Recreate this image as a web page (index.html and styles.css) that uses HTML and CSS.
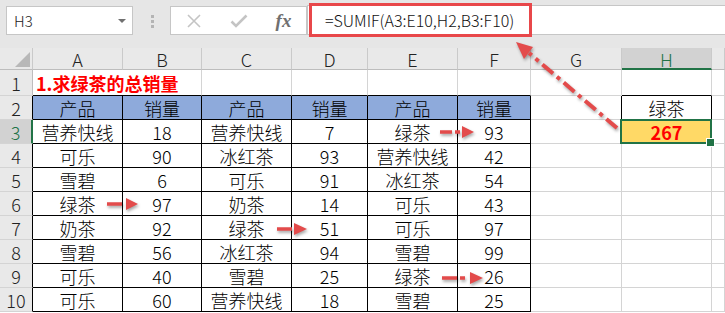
FILE: index.html
```html
<!DOCTYPE html>
<html lang="zh-CN">
<head>
<meta charset="utf-8">
<title>SUMIF</title>
<link rel="stylesheet" href="styles.css">
</head>
<body>
<div class="app">
  <div class="toolbar">
    <div class="namebox"><span>H3</span><span class="caret"></span></div>
    <div class="grip"><i></i><i></i><i></i></div>
    <div class="fbtns">
      <span class="fbtn"><svg width="16" height="16" viewBox="0 0 16 16"><path d="M2 2 L14 14 M14 2 L2 14" class="ico"/></svg></span>
      <span class="fbtn"><svg width="18" height="16" viewBox="0 0 18 16"><path d="M1.5 8.5 L6 13 L16.5 2.5" class="ico ico-check"/></svg></span>
      <span class="fbtn fx">fx</span>
    </div>
    <div class="formula"><span class="formula-box">=SUMIF(A3:E10,H2,B3:F10)</span></div>
  </div>
  <div class="sheet">
    <div class="ch corner"><span class="tri"></span></div>
    <div class="ch">A</div><div class="ch">B</div><div class="ch">C</div><div class="ch">D</div><div class="ch">E</div><div class="ch">F</div><div class="ch">G</div><div class="ch sel">H</div><div class="ch"></div>

    <div class="rh r1">1</div>
    <div class="title tt">1.求绿茶的总销量</div><div class="tt"></div><div class="tt"></div><div class="tt"></div><div class="tt"></div><div></div><div class="tt"></div><div></div>

    <div class="rh tl">2</div>
    <div class="t th">产品</div><div class="t th">销量</div><div class="t th">产品</div><div class="t th">销量</div><div class="t th">产品</div><div class="t th">销量</div><div class="tr"></div><div class="t">绿茶</div><div></div>

    <div class="rh sel">3</div>
    <div class="t">营养快线</div><div class="t">18</div><div class="t">营养快线</div><div class="t">7</div><div class="t">绿茶</div><div class="t">93</div><div></div><div class="active">267</div><div></div>

    <div class="rh tl">4</div>
    <div class="t">可乐</div><div class="t">90</div><div class="t">冰红茶</div><div class="t">93</div><div class="t">营养快线</div><div class="t">42</div><div></div><div></div><div></div>

    <div class="rh tl">5</div>
    <div class="t">雪碧</div><div class="t">6</div><div class="t">可乐</div><div class="t">91</div><div class="t">冰红茶</div><div class="t">54</div><div></div><div></div><div></div>

    <div class="rh tl">6</div>
    <div class="t">绿茶</div><div class="t">97</div><div class="t">奶茶</div><div class="t">14</div><div class="t">可乐</div><div class="t">43</div><div></div><div></div><div></div>

    <div class="rh tl">7</div>
    <div class="t">奶茶</div><div class="t">92</div><div class="t">绿茶</div><div class="t">51</div><div class="t">可乐</div><div class="t">97</div><div></div><div></div><div></div>

    <div class="rh tl">8</div>
    <div class="t">雪碧</div><div class="t">56</div><div class="t">冰红茶</div><div class="t">94</div><div class="t">雪碧</div><div class="t">99</div><div></div><div></div><div></div>

    <div class="rh tl">9</div>
    <div class="t">可乐</div><div class="t">40</div><div class="t">雪碧</div><div class="t">25</div><div class="t">绿茶</div><div class="t">26</div><div></div><div></div><div></div>

    <div class="rh tl">10</div>
    <div class="t">可乐</div><div class="t">60</div><div class="t">营养快线</div><div class="t">18</div><div class="t">雪碧</div><div class="t">25</div><div></div><div></div><div></div>
  </div>

  <svg class="arrows" width="725" height="313" viewBox="0 0 725 313">
    <g class="arrow big">
      <line x1="617" y1="128" x2="529" y2="53" stroke-dasharray="14 5 4 5"/>
      <polygon points="516,42 533,47 524,59"/>
    </g>
    <g class="arrow">
      <line x1="440" y1="132" x2="462" y2="132" stroke-dasharray="12 3 5 2"/>
      <polygon points="462,126 474,132 462,138"/>
    </g>
    <g class="arrow">
      <line x1="107" y1="204" x2="126" y2="204" stroke-dasharray="15 4"/>
      <polygon points="126,198 138,204 126,210"/>
    </g>
    <g class="arrow">
      <line x1="277" y1="229" x2="294" y2="229" stroke-dasharray="15 2"/>
      <polygon points="294,223 307,229 294,235"/>
    </g>
    <g class="arrow">
      <line x1="442" y1="278" x2="470" y2="278" stroke-dasharray="15 3 5 5"/>
      <polygon points="470,272 483,278 470,284"/>
    </g>
  </svg>
</div>
</body>
</html>
```

FILE: styles.css
```css
* { box-sizing: border-box; }
html, body { margin: 0; padding: 0; }
body {
  width: 725px;
  height: 313px;
  overflow: hidden;
  background: #fff;
  font-family: "Noto Sans CJK SC", "Noto Sans", sans-serif;
  color: #000;
}
.app { position: relative; width: 725px; height: 313px; }

/* ---------- toolbar ---------- */
.toolbar {
  height: 48px;
  background: #e6e6e6;
  display: flex;
  align-items: flex-start;
  padding: 6px 0 0 6px;
}
.namebox {
  width: 127px;
  height: 29px;
  background: #fff;
  border: 1px solid #c6c6c6;
  display: flex;
  align-items: center;
  justify-content: space-between;
  padding: 0 6px 0 7px;
  font-size: 15px;
  font-weight: 300;
  color: #222;
}
.caret {
  width: 0; height: 0;
  border-left: 4px solid transparent;
  border-right: 4px solid transparent;
  border-top: 4px solid #707070;
}
.grip {
  margin: 9px 0 0 18px;
  display: flex;
  flex-direction: column;
  gap: 2px;
}
.grip i { display: block; width: 3px; height: 3px; background: #b4b4b4; }
.fbtns {
  margin-left: 16px;
  width: 137px;
  height: 29px;
  background: #fff;
  border: 1px solid #c6c6c6;
  display: flex;
  align-items: center;
}
.fbtn {
  width: 45px;
  display: flex;
  align-items: center;
  justify-content: center;
}
.ico { fill: none; stroke: #c4c4c4; stroke-width: 1.6; }
.ico-check { stroke-width: 2.6; }
.fx {
  font-family: "Liberation Serif", serif;
  font-style: italic;
  font-weight: bold;
  font-size: 19px;
  color: #707070;
  line-height: 27px;
}
.formula {
  flex: 1;
  height: 30px;
  margin-top: -1px;
  background: #fff;
  border: 1px solid #c6c6c6;
  border-right: none;
}
.formula-box {
  display: block;
  margin: -3px 0 0 1px;
  width: 223px;
  height: 34px;
  border: 3px solid #e8474a;
  padding-left: 13px;
  font-size: 16px;
  font-weight: 300;
  line-height: 28px;
  color: #111;
  white-space: nowrap;
}

/* ---------- sheet ---------- */
.sheet {
  display: grid;
  grid-template-columns: 33px 90px 79px 90px 76px 90px 73px 91px 90px 13px;
  grid-template-rows: 22px 26px repeat(9, 24px);
  font-size: 18px;
  font-weight: 300;
  background: #fff;
}
.sheet > div {
  border-right: 1px solid #d4d4d4;
  border-bottom: 1px solid #d4d4d4;
  text-align: center;
  line-height: 24px;
  white-space: nowrap;
}
.sheet > .ch {
  background: #e9e9e9;
  border-right-color: #cacaca;
  border-bottom-color: #bdbdbd;
  line-height: 22px;
  color: #222;
}
.corner { position: relative; }
.tri {
  position: absolute;
  right: 2px;
  bottom: 2px;
  width: 0; height: 0;
  border-left: 15px solid transparent;
  border-bottom: 15px solid #b8b8b8;
}
.sheet > .ch.sel {
  background: #d2d2d2;
  color: #217346;
  border-bottom: 2px solid #217346;
}
.sheet > .rh {
  background: #e9e9e9;
  border-right-color: #bdbdbd;
  color: #222;
}
.sheet > .rh.r1 { line-height: 26px; }
.sheet > .rh.sel {
  background: #d2d2d2;
  color: #217346;
  border-right: 2px solid #217346;
}
.sheet > .tl { border-right-color: #000; }
.sheet > .tt { border-bottom-color: #000; }
.sheet > .tr { border-right-color: #000; }
.sheet > .t { border-right-color: #000; border-bottom-color: #000; }
.sheet > .th { background: #8eaadb; }
.sheet > .title {
  grid-column: span 2;
  text-align: left;
  padding-left: 3px;
  color: #ff0000;
  font-weight: bold;
  line-height: 26px;
}
.sheet > .active {
  position: relative;
  background: #ffd966;
  color: #ff0000;
  font-weight: bold;
}
.active::after {
  content: "";
  position: absolute;
  left: -2px; top: -1px; right: -1px; bottom: -1px;
  border: 2px solid #217346;
}
.active::before {
  content: "";
  position: absolute;
  right: -4px;
  bottom: -4px;
  width: 7px;
  height: 7px;
  background: #217346;
  border: 1px solid #fff;
  z-index: 1;
}

/* ---------- annotation arrows ---------- */
.arrows {
  position: absolute;
  left: 0;
  top: 0;
  pointer-events: none;
}
.arrow {
  filter: drop-shadow(1px 2px 1.5px rgba(0, 0, 0, 0.35));
}
.arrow line { stroke: #e34b4b; stroke-width: 3.5; }
.arrow.big line { stroke-width: 4; }
.arrow polygon { fill: #e34b4b; }
```
